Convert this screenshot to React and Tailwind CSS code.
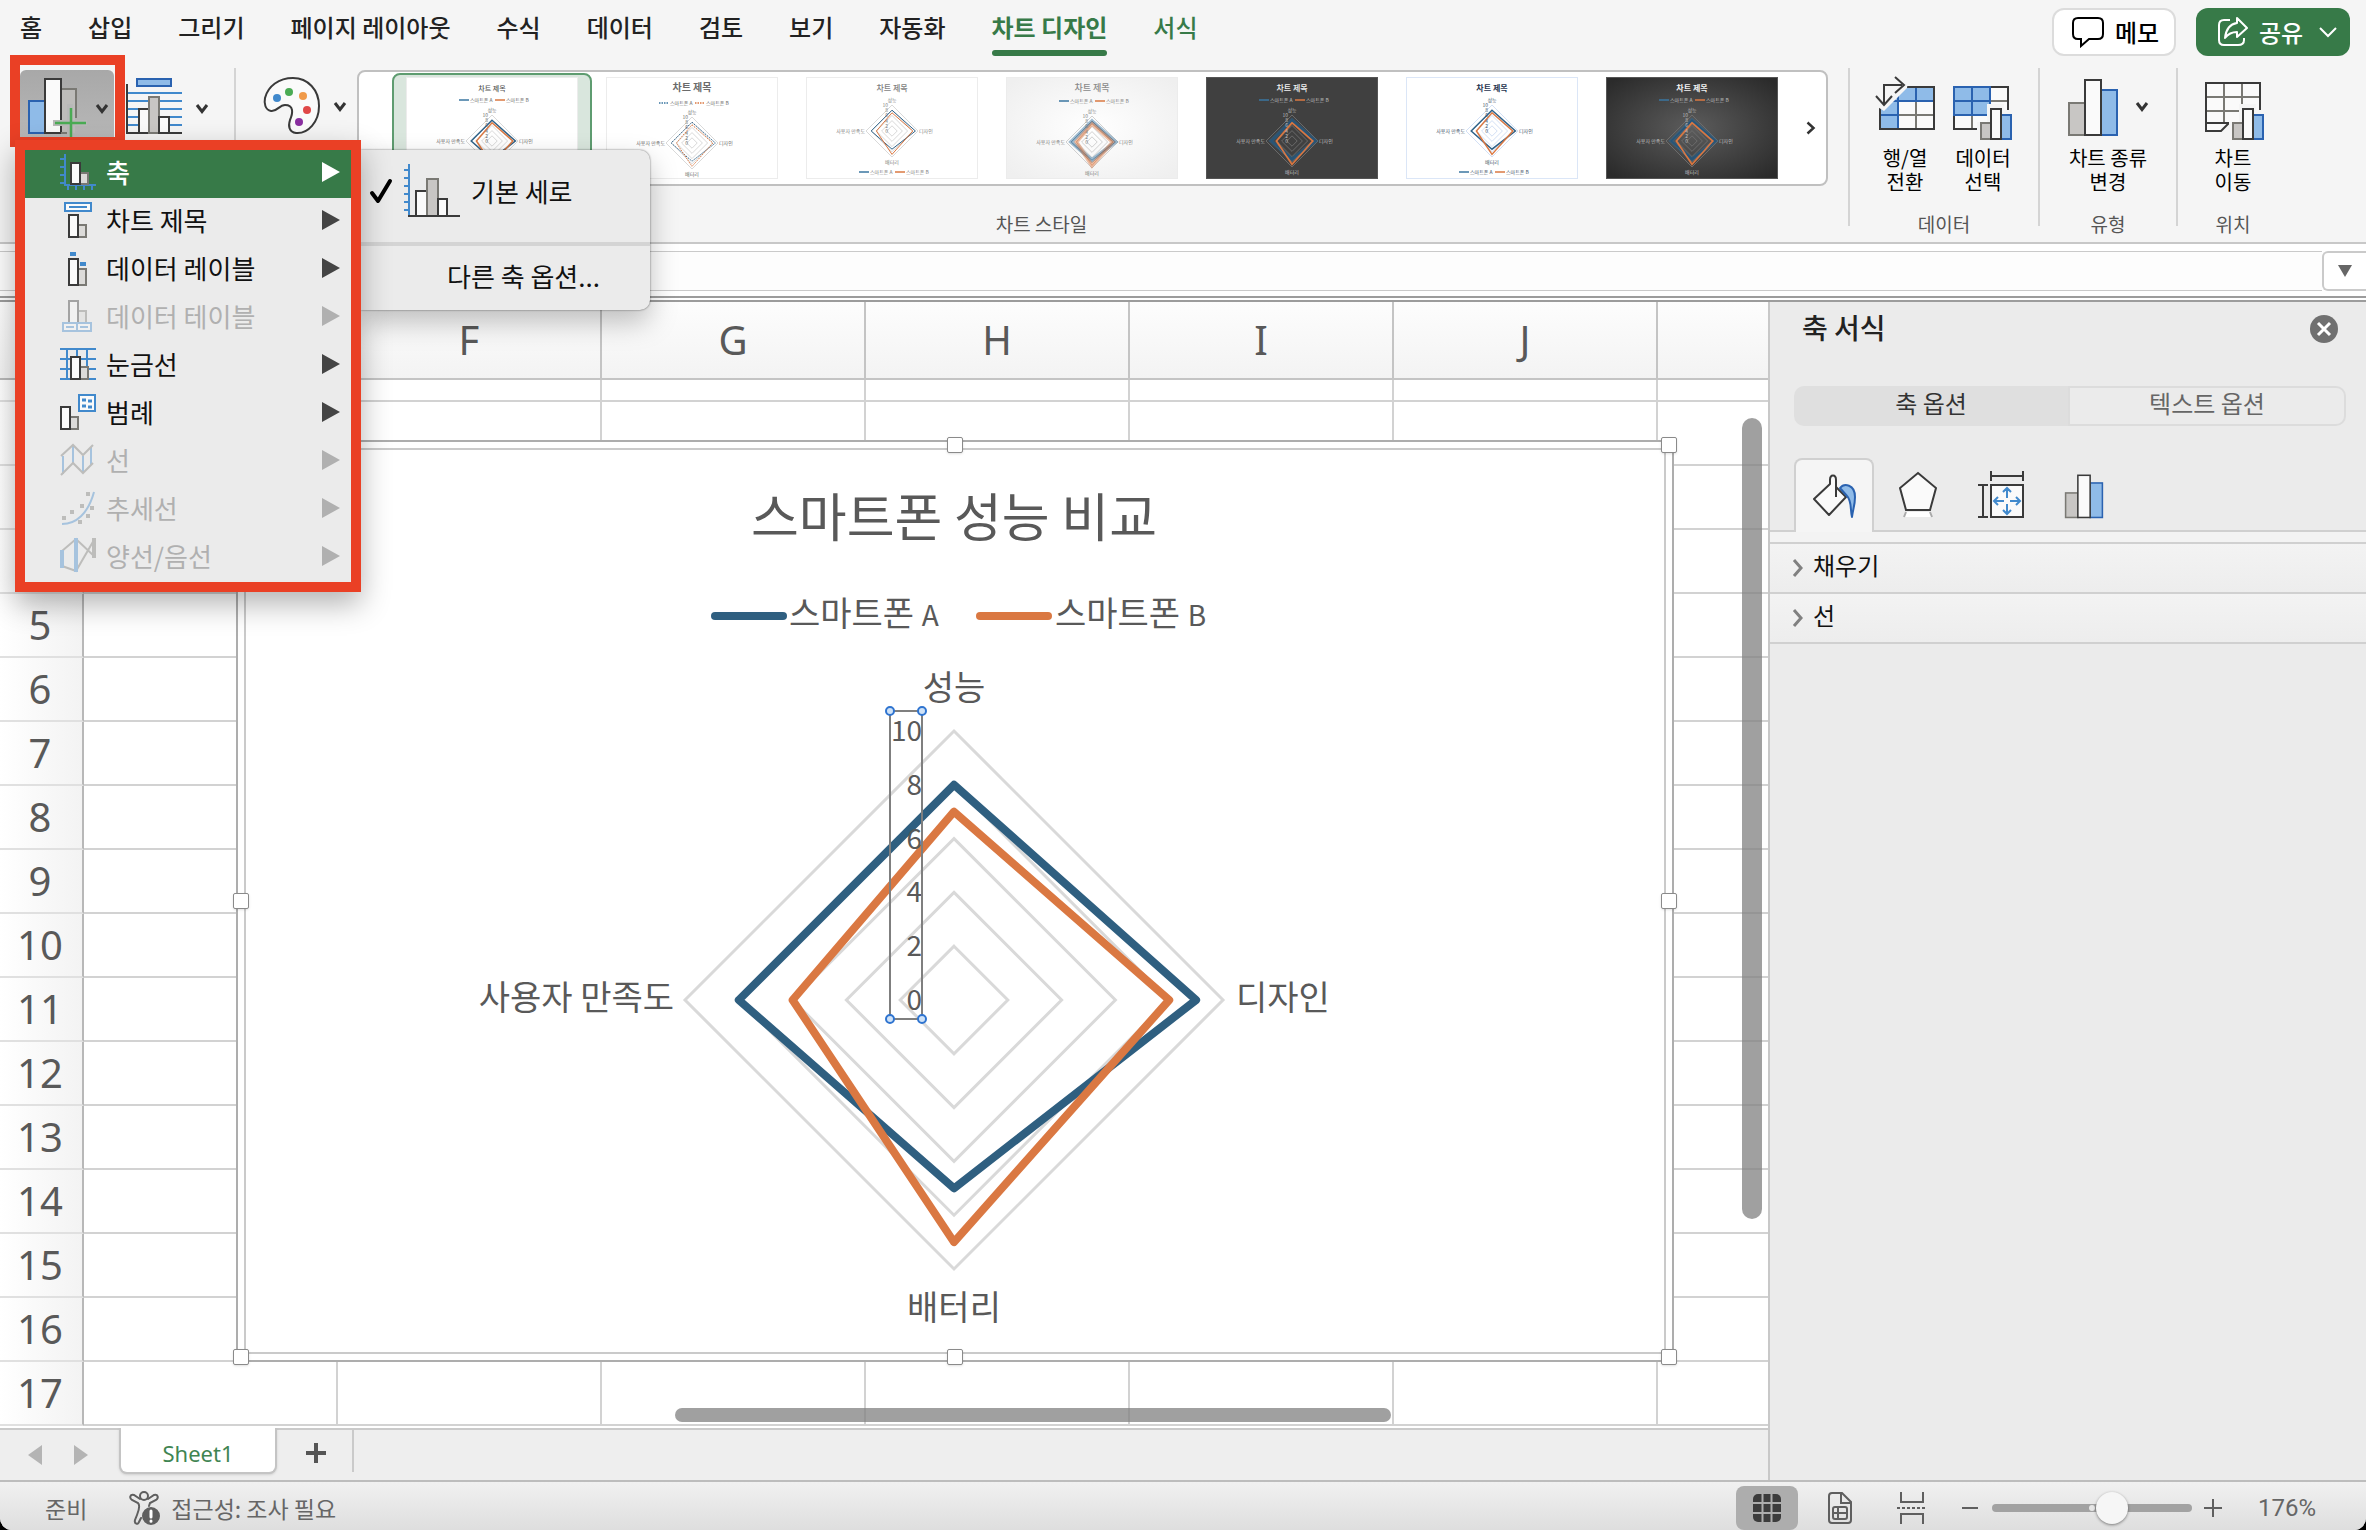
import { useId, useState } from "react";
import clsx from "clsx";

const DARK = "#3a3a3a";
const BLUE = "#4189cc";
const DEEP = "#2a62b0";
const SKY = "#8fbbe8";
const GRAY = "#7a7974";
const SILVER = "#c8c6c4";
const NAVY = "#2f5f80";
const ORANGE = "#da7842";

const tabs = [
  "홈",
  "삽입",
  "그리기",
  "페이지 레이아웃",
  "수식",
  "데이터",
  "검토",
  "보기",
  "자동화",
  "차트 디자인",
  "서식",
];

const columns = ["", "F", "G", "H", "I", "J"];
const rows = ["", "", "", "", 5, 6, 7, 8, 9, 10, 11, 12, 13, 14, 15, 16, 17];

// 레이더 차트 데이터 (위, 오른쪽, 아래, 왼쪽)
const seriesA = [8, 9, 7, 8];
const seriesB = [7, 8, 9, 6];
const ticks = [10, 8, 6, 4, 2, 0];

const radar = (cx, cy, r, v) =>
  [
    [cx, cy - (r * v[0]) / 10],
    [cx + (r * v[1]) / 10, cy],
    [cx, cy + (r * v[2]) / 10],
    [cx - (r * v[3]) / 10, cy],
  ]
    .map((p) => p.join(","))
    .join(" ");

function Chevron({ className }) {
  return (
    <svg className={className} width="14" height="12" viewBox="0 0 14 12" fill="none">
      <path d="M2 2 L7 8.5 L12 2" stroke="#333" strokeWidth="3" />
    </svg>
  );
}

/* ---------- 리본 아이콘 ---------- */

function AddElementIcon() {
  return (
    <svg width="62" height="62" viewBox="0 0 62 62" fill="none">
      <rect x="3" y="25" width="16" height="32" fill={SKY} stroke={DEEP} strokeWidth="2" />
      <path d="M35 13 H50 V42" stroke={GRAY} strokeWidth="2" />
      <rect x="36" y="14" width="13" height="43" fill="#bdbcba" />
      <rect x="19" y="3" width="16" height="54" fill="#fafafa" stroke={DARK} strokeWidth="2" />
      <path d="M35 57 H41" stroke={GRAY} strokeWidth="2" />
      <path d="M44 28 V62 M27 47 H61" stroke="#b8b8b8" strokeWidth="6" />
      <path d="M45 32 V62 M29 47 H60" stroke="#4aab54" strokeWidth="2.5" />
    </svg>
  );
}

function QuickLayoutIcon() {
  return (
    <svg width="58" height="60" viewBox="0 0 58 60" fill="none">
      <path d="M3 17 H57 M3 25 H57 M3 33 H57 M3 41 H57 M3 49 H57" stroke={BLUE} strokeWidth="2" />
      <rect x="12" y="3" width="34" height="7" fill={SKY} stroke={DEEP} strokeWidth="2" />
      <path d="M2 8 V57 H57" stroke={DARK} strokeWidth="2" />
      <rect x="14" y="33" width="10" height="24" fill="#fafafa" stroke={DARK} strokeWidth="2" />
      <rect x="24" y="21" width="10" height="36" fill={SILVER} stroke={GRAY} strokeWidth="2" />
      <rect x="34" y="41" width="10" height="16" fill="#fafafa" stroke={DARK} strokeWidth="2" />
    </svg>
  );
}

function PaletteIcon() {
  return (
    <svg width="58" height="60" viewBox="0 0 58 60" fill="none">
      <path
        d="M30 2 C45 2 56 14 56 30 C56 46 45 58 33 57 C26 56 25 50 27 44 C30 37 31 29 22 29 C16 29 14 36 8 35 C2 34 1 27 2 22 C5 10 16 2 30 2 Z"
        fill="#fafafa"
        stroke={DARK}
        strokeWidth="2"
      />
      <circle cx="14" cy="22" r="4" fill="#4189cc" />
      <circle cx="26" cy="16" r="4" fill="#4aab54" />
      <circle cx="40" cy="20" r="4" fill="#f09a4a" />
      <circle cx="44" cy="34" r="4" fill="#e04848" />
      <circle cx="36" cy="46" r="4" fill="#8a2fa0" />
    </svg>
  );
}

function SwitchRowColIcon() {
  return (
    <svg width="64" height="66" viewBox="0 0 64 66" fill="none">
      <rect x="7" y="13" width="54" height="42" fill="#fafafa" />
      <path d="M7 13 H61 V27 H25 V55 H7 Z" fill={SKY} />
      <path d="M25 41 H61 M43 27 V55" stroke={GRAY} strokeWidth="2" />
      <rect x="7" y="13" width="54" height="42" stroke={DARK} strokeWidth="2" />
      <path d="M8 27 H60 M25 14 V54 M43 14 V27 M8 41 H25" stroke={DEEP} strokeWidth="2" />
      <path d="M0 0 H36 L34 14 L11 37 L0 30 Z" fill="#f5f5f5" />
      <path d="M11 30 V11 H29 M22 3 L31 11 L22 19 M3 22 L11 31 L19 22" stroke={DARK} strokeWidth="2" />
    </svg>
  );
}

function SmallBars({ x, y }) {
  return (
    <g transform={`translate(${x} ${y})`}>
      <path d="M-3 15 H7 V-3 H24 V3 H36 V36 H-3 Z" fill="#f5f5f5" />
      <rect x="1" y="16" width="10" height="16" fill={SILVER} stroke={GRAY} strokeWidth="2" />
      <rect x="21" y="8" width="10" height="24" fill={SKY} stroke={DEEP} strokeWidth="2" />
      <rect x="11" y="2" width="10" height="30" fill="#fafafa" stroke={DARK} strokeWidth="2" />
    </g>
  );
}

function SelectDataIcon() {
  return (
    <svg width="64" height="66" viewBox="0 0 64 66" fill="none">
      <rect x="3" y="13" width="54" height="42" fill="#fafafa" stroke={DARK} strokeWidth="2" />
      <path d="M39 27 H56 M21 41 V54 M39 41 V54" stroke={GRAY} strokeWidth="2" />
      <rect x="3" y="13" width="36" height="28" fill={SKY} stroke={DEEP} strokeWidth="2" />
      <path d="M3 27 H39 M21 13 V41" stroke={DEEP} strokeWidth="2" />
      <SmallBars x={29} y={33} />
    </svg>
  );
}

function MoveChartIcon() {
  return (
    <svg className="ml-1" width="64" height="66" viewBox="0 0 64 66" fill="none">
      <path d="M3 9 H57 V50 H25 L18 57 H3 Z" fill="#fafafa" />
      <path d="M3 23 H57 M3 37 H57 M21 9 V49 M39 9 V49" stroke={GRAY} strokeWidth="2" />
      <path d="M57 40 V9 H3 V57 H18 L26 49 H3" stroke={DARK} strokeWidth="2" />
      <SmallBars x={29} y={33} />
    </svg>
  );
}

function ChangeTypeIcon({ width = 52, height = 60 }) {
  return (
    <svg className="shrink-0" width={width} height={height} viewBox="0 0 52 60" fill="none">
      <rect x="2" y="26" width="16" height="32" fill={SILVER} stroke={GRAY} strokeWidth="2" />
      <rect x="34" y="13" width="16" height="45" fill={SKY} stroke={DEEP} strokeWidth="2" />
      <rect x="18" y="3" width="16" height="55" fill="#fafafa" stroke={DARK} strokeWidth="2" />
    </svg>
  );
}

/* ---------- 차트 요소 메뉴 아이콘 ---------- */

function Bars({ x, y, h }) {
  return (
    <>
      <rect x={x + 9} y={y + 10} width="8" height={h - 10} fill="#dcdbd9" stroke={GRAY} strokeWidth="2" />
      <rect x={x} y={y} width="9" height={h} fill="#fafafa" stroke={DARK} strokeWidth="2" />
    </>
  );
}

const menuIcons = {
  axis: (
    <>
      <path d="M5 4 V35 H36 M0 9 H5 M0 17 H5 M0 25 H5 M0 33 H5 M8 35 V40 M16 35 V40 M24 35 V40 M32 35 V40" stroke={BLUE} strokeWidth="2" />
      <Bars x={11} y={13} h={21} />
    </>
  ),
  title: (
    <>
      <rect x="5" y="5" width="26" height="8" fill="#fafafa" stroke={BLUE} strokeWidth="2" />
      <path d="M9 9 H27" stroke={BLUE} strokeWidth="2" />
      <Bars x={9} y={17} h={22} />
    </>
  ),
  label: (
    <>
      <rect x="10" y="6" width="6" height="4" fill={BLUE} />
      <rect x="20" y="16" width="6" height="4" fill={BLUE} />
      <Bars x={9} y={13} h={26} />
    </>
  ),
  table: (
    <>
      <Bars x={9} y={7} h={22} />
      <path d="M3 29 H31 V37 H3 Z M17 29 V37" fill="#fafafa" stroke={BLUE} strokeWidth="2" />
      <path d="M6 33 H14 M20 33 H28" stroke={BLUE} strokeWidth="2" />
    </>
  ),
  grid: (
    <>
      <path d="M0 7 H36 M0 17 H36 M0 27 H36 M0 37 H36 M7 7 V38 M17 7 V38 M27 7 V38" stroke={BLUE} strokeWidth="2" />
      <Bars x={11} y={15} h={22} />
    </>
  ),
  legend: (
    <>
      <Bars x={1} y={17} h={22} />
      <rect x="19" y="5" width="16" height="16" fill="#fafafa" stroke={BLUE} strokeWidth="2" />
      <path d="M22 10 H26 M28 11 H32 M22 16 H26 M28 17 H32" stroke={BLUE} strokeWidth="3" />
    </>
  ),
  line: (
    <>
      <path d="M3 18 V36 M13 8 V26 M23 18 V35 M31 9 V27" stroke={BLUE} strokeWidth="2" />
      <path d="M1 18 L13 7 L23 17 L33 7 M1 37 L13 25 L23 35 L33 25" stroke={GRAY} strokeWidth="2" />
    </>
  ),
  trend: (
    <>
      <path d="M2 38 C16 38 28 28 34 6" stroke={BLUE} strokeWidth="2" />
      <path d="M26 8 H30 M20 20 H24 M10 26 H14 M2 32 H6 M30 22 H34 M26 30 H30 M18 36 H22" stroke={GRAY} strokeWidth="4" />
    </>
  ),
  updown: (
    <>
      <path d="M2 17 L16 5 L34 22 M2 32 L16 37 L34 6" stroke={GRAY} strokeWidth="2" />
      <path d="M2 16 V34 M16 4 V38" stroke={BLUE} strokeWidth="4" />
      <path d="M34 4 V24" stroke={GRAY} strokeWidth="4" />
    </>
  ),
};

const menuItems = [
  { key: "axis", label: "축" },
  { key: "title", label: "차트 제목" },
  { key: "label", label: "데이터 레이블" },
  { key: "table", label: "데이터 테이블", disabled: true },
  { key: "grid", label: "눈금선" },
  { key: "legend", label: "범례" },
  { key: "line", label: "선", disabled: true },
  { key: "trend", label: "추세선", disabled: true },
  { key: "updown", label: "양선/음선", disabled: true },
];

function ElementMenu() {
  const [active, setActive] = useState("axis");

  return (
    <ul className="absolute left-[15px] top-[76px] z-30 w-[346px] border-10 border-[#ea4025] bg-[#ebebeb] shadow-[0_12px_28px_rgba(0,0,0,0.3)]">
      {menuItems.map((item) => {
        const on = active === item.key;
        return (
          <li key={item.key}>
            <button
              type="button"
              disabled={item.disabled}
              onMouseEnter={() => setActive(item.key)}
              className={clsx(
                "flex h-12 w-full items-center pr-[11px] pl-[35px] text-left text-[26px] leading-none",
                on && "bg-[#377a48] font-medium text-white",
                !on && !item.disabled && "text-[#111]",
                item.disabled && "text-[#b0b0b0]"
              )}
            >
              <svg
                className={clsx("mr-[10px] shrink-0", item.disabled && "opacity-40")}
                width="36"
                height="48"
                viewBox="0 0 36 48"
                fill="none"
              >
                {menuIcons[item.key]}
              </svg>
              <span className="flex-1 pb-1">{item.label}</span>
              <svg className="mb-1" width="18" height="20" viewBox="0 0 18 20">
                <path d="M0 0 L18 10 L0 20 Z" fill={on ? "#fff" : item.disabled ? "#b0b0b0" : "#444"} />
              </svg>
            </button>
          </li>
        );
      })}
    </ul>
  );
}

function AxisSubmenu() {
  return (
    <div className="absolute left-[361px] top-[86px] z-20 w-[289px] rounded-r-[10px] bg-[#ebebeb] text-[26px] leading-none text-[#111] shadow-[0_0_2px_rgba(0,0,0,0.6),0_12px_28px_rgba(0,0,0,0.25)]">
      <button type="button" className="flex h-[92px] w-full items-center pb-2 pl-2">
        <svg width="24" height="28" viewBox="0 0 24 28" fill="none">
          <path d="M3 15 L9 23 L21 3" stroke="#000" strokeWidth="4" strokeLinecap="round" strokeLinejoin="round" />
        </svg>
        <svg className="ml-[10px]" width="58" height="56" viewBox="0 0 58 56" fill="none">
          <path d="M6 0 V52 M1 6 H6 M1 14 H6 M1 22 H6 M1 30 H6 M1 38 H6 M1 46 H6" stroke={BLUE} strokeWidth="2" />
          <rect x="13" y="27" width="11" height="25" fill="#fafafa" stroke={DARK} strokeWidth="2" />
          <rect x="24" y="15" width="11" height="37" fill={SILVER} stroke={GRAY} strokeWidth="2" />
          <rect x="35" y="35" width="9" height="17" fill="#fafafa" stroke={DARK} strokeWidth="2" />
          <path d="M5 52 H57" stroke={DARK} strokeWidth="2" />
        </svg>
        <span className="ml-[10px] pb-0.5">기본 세로</span>
      </button>
      <div className="h-1 bg-[#d4d4d4]" />
      <button type="button" className="flex h-16 w-full items-center pb-1 pl-[86px]">
        다른 축 옵션...
      </button>
    </div>
  );
}

/* ---------- 차트 스타일 갤러리 ---------- */

const styles = [
  { size: 7, title: "#595959", text: "#6b6b6b", grid: "#d9d9d9" },
  { size: 10, title: "#6b6b6b", text: "#6b6b6b", grid: "#d9d9d9", bold: true, thin: true, dash: "1.5 1", cy: 66, ly: 26 },
  { size: 8, title: "#7f7f7f", text: "#7f7f7f", grid: "#d9d9d9", bottom: true, thin: true },
  { size: 9, title: "#8a8a8a", text: "#7f7f7f", grid: "#d0d0d0", bg: ["#ffffff", "#efefef"], wide: true, cy: 65, ly: 24 },
  { size: 8, title: "#f2f2f2", text: "#bfbfbf", grid: "#6a6a6a", bg: ["#404040", "#404040"], glow: true },
  { size: 8, title: "#1f3550", text: "#44546a", grid: "#d3e0f5", bottom: true, bold: true, edge: "#dbe6f7" },
  { size: 8, title: "#f2f2f2", text: "#bfbfbf", grid: "#6c6c6c", bg: ["#5c5c5c", "#2b2b2b"], glow: true, bold: true },
];

function StyleThumb({ s }) {
  const id = useId();
  const cy = s.cy || (s.bottom ? 54 : 64);
  const r = 26;
  const ly = s.ly || (s.bottom ? 95 : 23);
  const width = s.wide ? 0.5 : s.thin ? 1 : 1.5;

  return (
    <svg width="172" height="102" viewBox="0 0 172 102" fill="none">
      <defs>
        <radialGradient id={id} cx="50%" cy="50%" r="65%">
          <stop offset="0" stopColor={s.bg ? s.bg[0] : "#fff"} />
          <stop offset="1" stopColor={s.bg ? s.bg[1] : "#fff"} />
        </radialGradient>
      </defs>
      <rect width="172" height="102" fill={`url(#${id})`} />
      <rect x="0.5" y="0.5" width="171" height="101" stroke={s.edge || (s.glow ? "#555" : "#ececec")} />
      <text x="86" y="14" textAnchor="middle" fontSize={s.size} fontWeight={s.bold ? 700 : 500} fill={s.title}>
        차트 제목
      </text>
      <path d={`M53 ${ly} H63`} stroke="#3a76a0" strokeWidth="1.5" strokeDasharray={s.dash} />
      <path d={`M89 ${ly} H99`} stroke={ORANGE} strokeWidth="1.5" strokeDasharray={s.dash} />
      <g fontSize="5" fill={s.text}>
        <text x="64" y={ly + 2}>스마트폰 A</text>
        <text x="100" y={ly + 2}>스마트폰 B</text>
        <text x="86" y={cy - 29} textAnchor="middle">성능</text>
        <text x="86" y={cy + 33} textAnchor="middle">배터리</text>
        <text x="59" y={cy + 2} textAnchor="end">사용자 만족도</text>
        <text x="113" y={cy + 2}>디자인</text>
      </g>
      {[2, 4, 6, 8, 10].map((v) => (
        <polygon key={v} points={radar(86, cy, r, [v, v, v, v])} stroke={s.grid} />
      ))}
      {(s.wide || s.glow) && (
        <>
          <polygon points={radar(86, cy, r, seriesA)} stroke="#2a6a98" strokeWidth="4" opacity="0.45" />
          <polygon points={radar(86, cy, r, seriesB)} stroke={ORANGE} strokeWidth={s.wide ? 4 : 2} opacity="0.45" />
        </>
      )}
      <polygon points={radar(86, cy, r, seriesA)} stroke={s.glow ? "#25557a" : "#2f6288"} strokeWidth={width} strokeDasharray={s.dash} />
      <polygon points={radar(86, cy, r, seriesB)} stroke={ORANGE} strokeWidth={width} strokeDasharray={s.dash} />
      <g fontSize="5" fill={s.text} textAnchor="end">
        {ticks.map((t) => (
          <text key={t} x="82" y={cy + 2 - (r * t) / 10}>
            {t}
          </text>
        ))}
      </g>
    </svg>
  );
}

function RibbonButton({ icon, label, children }) {
  return (
    <button type="button" className="flex w-[78px] flex-col items-center text-[20px] leading-6 text-black">
      <span className="flex h-[78px] items-center">
        {icon}
        {children}
      </span>
      <span className="whitespace-pre">{label}</span>
    </button>
  );
}

function RibbonGroup({ label, className, children }) {
  return (
    <div className={clsx("flex flex-col", className)}>
      <div className="flex h-[142px] justify-center">{children}</div>
      <div className="text-center text-[19px] leading-7 text-[#555]">{label}</div>
    </div>
  );
}

function Divider() {
  return <div className="h-[158px] w-0.5 shrink-0 bg-[#d4d4d4]" />;
}

function Ribbon() {
  return (
    <div className="relative flex h-[180px] shrink-0 items-start border-b-2 border-[#c8c8c8] pt-1">
      <div className="flex w-[234px] shrink-0 items-start pt-0.5 pl-5">
        <button
          type="button"
          aria-label="차트 요소 추가"
          className="flex h-[70px] w-[94px] items-start rounded-t-md bg-linear-to-b from-[#a8a8a8] to-[#b8b8b8] pt-1.5 pl-1.5"
        >
          <AddElementIcon />
          <Chevron className="mt-[27px] ml-[7px]" />
        </button>
        <button type="button" aria-label="빠른 레이아웃" className="ml-[11px] flex items-start pt-1.5">
          <QuickLayoutIcon />
          <Chevron className="mt-[27px] ml-3" />
        </button>
      </div>
      <Divider />
      <button type="button" aria-label="색 변경" className="ml-[27px] flex shrink-0 items-start pt-2">
        <PaletteIcon />
        <Chevron className="mt-[25px] ml-3" />
      </button>
      <div className="mr-5 ml-[10px] flex min-w-0 flex-1 flex-col pt-0.5">
        <div className="flex h-[116px] items-center overflow-hidden rounded-lg border-2 border-[#c0c0c0] bg-white pl-[33px]">
          {styles.map((s, i) => (
            <button
              key={i}
              type="button"
              aria-label={`스타일 ${i + 1}`}
              className={clsx(
                "flex h-[110px] w-[200px] shrink-0 items-center justify-center rounded-lg",
                i === 0 && "border-2 border-[#5e9c70] bg-[#d9e6dd]"
              )}
            >
              <StyleThumb s={s} />
            </button>
          ))}
          <button type="button" aria-label="다음 스타일" className="ml-auto pr-[10px]">
            <svg width="10" height="14" viewBox="0 0 10 14" fill="none">
              <path d="M1.5 1.5 L7.5 7 L1.5 12.5" stroke="#333" strokeWidth="2.5" />
            </svg>
          </button>
        </div>
        <div className="mt-6 pr-[102px] text-center text-[19px] leading-7 text-[#555]">차트 스타일</div>
      </div>
      <Divider />
      <RibbonGroup label="데이터" className="w-[188px] shrink-0">
        <RibbonButton icon={<SwitchRowColIcon />} label={"행/열\n전환"} />
        <RibbonButton icon={<SelectDataIcon />} label={"데이터\n선택"} />
      </RibbonGroup>
      <Divider />
      <RibbonGroup label="유형" className="w-[136px] shrink-0">
        <RibbonButton icon={<ChangeTypeIcon />} label={"차트 종류\n변경"}>
          <Chevron className="ml-4 shrink-0" />
        </RibbonButton>
      </RibbonGroup>
      <Divider />
      <RibbonGroup label="위치" className="mr-[78px] w-[110px] shrink-0">
        <RibbonButton icon={<MoveChartIcon />} label={"차트\n이동"} />
      </RibbonGroup>

      {/* 강조 테두리 + 펼쳐진 메뉴 */}
      <div className="pointer-events-none absolute -top-[9px] left-[10px] z-30 h-[92px] w-[115px] border-10 border-[#ea4025]" />
      <ElementMenu />
      <AxisSubmenu />
    </div>
  );
}

function Handle({ className }) {
  return <span className={clsx("absolute size-4 rounded-xs border border-[#8a8a8a] bg-white shadow-sm", className)} />;
}

function Chart() {
  const cx = 717;
  const cy = 559;
  const r = 269;

  return (
    <div className="absolute top-[138px] left-[236px] h-[922px] w-[1438px] border-2 border-[#adadad] bg-white p-1.5">
      <div className="h-full border-2 border-[#cacaca]" />
      <svg className="absolute inset-0" width="1434" height="918" viewBox="1 1 1434 918" fill="none">
        <text x={cx} y="96" textAnchor="middle" fontSize="52" fill="#595959">
          스마트폰 성능 비교
        </text>
        <path d="M478 175 H546" stroke={NAVY} strokeWidth="8" strokeLinecap="round" />
        <path d="M743 175 H811" stroke={ORANGE} strokeWidth="8" strokeLinecap="round" />
        <g fontSize="34" fill="#595959">
          <text x="552" y="185">
            스마트폰 <tspan fontSize="28">A</tspan>
          </text>
          <text x="818" y="185">
            스마트폰 <tspan fontSize="28">B</tspan>
          </text>
          <text x={cx} y="259" textAnchor="middle">성능</text>
          <text x="999" y="569">디자인</text>
          <text x={cx} y="879" textAnchor="middle">배터리</text>
          <text x="437" y="569" textAnchor="end">사용자 만족도</text>
        </g>
        {[2, 4, 6, 8, 10].map((v) => (
          <polygon key={v} points={radar(cx, cy, r, [v, v, v, v])} stroke="#d9d9d9" strokeWidth="3" />
        ))}
        <polygon points={radar(cx, cy, r, seriesA)} stroke={NAVY} strokeWidth="8" strokeLinejoin="round" />
        <polygon points={radar(cx, cy, r, seriesB)} stroke={ORANGE} strokeWidth="8" strokeLinejoin="round" />
        <g fontSize="28" fill="#595959" textAnchor="end">
          {ticks.map((t) => (
            <text key={t} x="685" y={cy + 10 - (r * t) / 10}>
              {t}
            </text>
          ))}
        </g>
        <rect x="653" y="270" width="32" height="308" stroke="#7f7f7f" strokeWidth="2" />
        {[
          [653, 270],
          [685, 270],
          [653, 578],
          [685, 578],
        ].map(([x, y]) => (
          <circle key={`${x}-${y}`} cx={x} cy={y} r="4" fill="#cfe2f7" stroke="#2f74d0" strokeWidth="2" />
        ))}
      </svg>
      <Handle className="-top-[5px] -left-[5px]" />
      <Handle className="-top-[5px] left-1/2 -translate-x-1/2" />
      <Handle className="-top-[5px] -right-[5px]" />
      <Handle className="top-1/2 -left-[5px] -translate-y-1/2" />
      <Handle className="top-1/2 -right-[5px] -translate-y-1/2" />
      <Handle className="-bottom-[5px] -left-[5px]" />
      <Handle className="-bottom-[5px] left-1/2 -translate-x-1/2" />
      <Handle className="-right-[5px] -bottom-[5px]" />
    </div>
  );
}

function Sheet() {
  return (
    <div className="relative min-h-0 flex-1 overflow-hidden bg-white">
      <table className="w-full table-fixed border-separate border-spacing-0 font-['Noto_Sans',sans-serif] text-[#595959]">
        <thead>
          <tr className="h-[78px] bg-linear-to-b from-[#fdfdfd] to-[#f3f3f3]">
            <th className="w-[84px] border-r-2 border-b-2 border-[#b8b8b8]" />
            {columns.map((c, i) => (
              <th
                key={i}
                scope="col"
                className={clsx(
                  "border-r-2 border-b-2 border-[#c4c4c4] p-0 text-[40px] leading-none font-normal",
                  i === 0 ? "w-[254px]" : "w-[264px]"
                )}
              >
                {c}
              </th>
            ))}
            <th className="border-b-2 border-[#c4c4c4]" />
          </tr>
        </thead>
        <tbody>
          {rows.map((n, i) => (
            <tr key={i} className={i === 0 ? "h-[22px]" : "h-16"}>
              <th
                scope="row"
                className="border-r-2 border-b-2 border-r-[#b8b8b8] border-b-[#e0e0e0] bg-linear-to-r from-white to-[#f3f3f3] p-0 pr-0.5 text-[40px] leading-none font-normal"
              >
                {n}
              </th>
              {columns.map((c, j) => (
                <td key={j} className="border-r-2 border-b-2 border-[#d2d2d2] p-0" />
              ))}
              <td className="border-b-2 border-[#d2d2d2] p-0" />
            </tr>
          ))}
        </tbody>
      </table>
      <Chart />
      <div className="absolute top-[116px] right-1.5 h-[801px] w-5 rounded-full bg-[#808080]/75" />
      <div className="absolute bottom-1.5 left-[675px] h-3.5 w-[716px] rounded-full bg-[#808080]/75" />
    </div>
  );
}

function SheetBar() {
  return (
    <div className="flex h-[52px] shrink-0 items-start border-t-2 border-[#cacaca] bg-[#eeeeee]">
      <button type="button" aria-label="이전 시트" className="mt-[15px] ml-7">
        <svg width="14" height="20" viewBox="0 0 14 20">
          <path d="M14 0 V20 L0 10 Z" fill="#b4b4b4" />
        </svg>
      </button>
      <button type="button" aria-label="다음 시트" className="mt-[15px] ml-8">
        <svg width="14" height="20" viewBox="0 0 14 20">
          <path d="M0 0 V20 L14 10 Z" fill="#b4b4b4" />
        </svg>
      </button>
      <button
        type="button"
        className="-mt-0.5 ml-[31px] h-[46px] w-[158px] rounded-b-lg border-2 border-t-0 border-[#c4c4c4] bg-white pt-1.5 font-['Noto_Sans',sans-serif] text-[22px] text-[#3f8552] shadow-sm"
      >
        Sheet1
      </button>
      <button type="button" aria-label="시트 추가" className="mt-[13px] ml-[29px]">
        <svg width="20" height="20" viewBox="0 0 20 20">
          <path d="M10 0 V20 M0 10 H20" stroke="#555" strokeWidth="4" />
        </svg>
      </button>
      <div className="ml-[26px] h-[42px] w-0.5 bg-[#cacaca]" />
    </div>
  );
}

function FormatPane() {
  return (
    <aside className="flex w-[598px] shrink-0 flex-col border-l-2 border-[#c8c8c8] bg-[#ebebeb]">
      <div className="flex h-[54px] items-center justify-between pr-7 pl-8">
        <h2 className="pb-1 text-[28px] leading-none font-medium text-[#222]">축 서식</h2>
        <button type="button" aria-label="닫기">
          <svg width="28" height="28" viewBox="0 0 28 28" fill="none">
            <circle cx="14" cy="14" r="14" fill="#707070" />
            <path d="M8 8 L20 20 M20 8 L8 20" stroke="#fff" strokeWidth="3" />
          </svg>
        </button>
      </div>

      <div className="mt-[30px] mr-5 ml-6 flex h-10 text-[24px] leading-none">
        <button type="button" className="flex-1 rounded-l-[10px] bg-[#dfdfdf] pb-1.5 text-[#333]">
          축 옵션
        </button>
        <button type="button" className="flex-1 rounded-r-[10px] border-2 border-[#dcdcdc] pb-1.5 text-[#666]">
          텍스트 옵션
        </button>
      </div>

      <div className="mt-8 flex h-[74px]">
        <div className="w-6 border-b-2 border-[#d0d0d0]" />
        <button
          type="button"
          aria-label="채우기 및 선"
          className="flex w-20 items-center justify-center rounded-t-lg border-2 border-b-0 border-[#d0d0d0] bg-[#f5f5f5]"
        >
          <svg width="46" height="46" viewBox="0 0 46 46" fill="none">
            <path
              d="M25 24 V7 C25 1 19 1 19 7 V11 L3 26 L18 42 L35 24 L25 14"
              fill="#fafafa"
              stroke={DARK}
              strokeWidth="2"
              strokeLinejoin="round"
            />
            <path
              d="M29 15 C33 10 44 11 44 24 C44 32 42 36 41 44 C39 36 41 28 36 23 Z"
              fill={SKY}
              stroke={DEEP}
              strokeWidth="2"
              strokeLinejoin="round"
            />
          </svg>
        </button>
        <div className="flex flex-1 items-center border-b-2 border-[#d0d0d0] pl-6">
          <button type="button" aria-label="효과">
            <svg width="40" height="48" viewBox="0 0 40 48" fill="none">
              <path d="M20 3 L38 18 L32 40 H8 L2 18 Z" fill="#fafafa" stroke={DARK} strokeWidth="2" />
              <path d="M8 42 H32 L34 47 H6 Z" fill="#fff" />
              <path d="M8 42 L6 47 M32 42 L34 47" stroke="#aaa" strokeWidth="2" />
            </svg>
          </button>
          <button type="button" aria-label="크기 및 속성" className="ml-[39px]">
            <svg width="48" height="48" viewBox="0 0 48 48" fill="none">
              <rect x="14" y="15" width="32" height="32" fill="#fafafa" stroke={DARK} strokeWidth="2" />
              <path d="M14 1 V11 M46 1 V11 M14 6 H46 M1 15 H11 M1 47 H11 M6 15 V47" stroke={DARK} strokeWidth="2" />
              <path
                d="M30 28 V18 M26 22 L30 18 L34 22 M30 34 V44 M26 40 L30 44 L34 40 M27 31 H17 M21 27 L17 31 L21 35 M33 31 H43 M39 27 L43 31 L39 35"
                stroke={BLUE}
                strokeWidth="2"
              />
            </svg>
          </button>
          <button type="button" aria-label="축 옵션" className="ml-[39px] pt-1">
            <ChangeTypeIcon width={40} height={46} />
          </button>
        </div>
      </div>

      <div className="h-[10px] bg-[#f3f3f3]" />
      {["채우기", "선"].map((s) => (
        <button
          key={s}
          type="button"
          className="flex h-[50px] items-center border-t-2 border-[#d0d0d0] bg-linear-to-b from-[#f3f3f3] to-[#ededed] pl-[22px] text-[24px] leading-none text-[#111]"
        >
          <svg width="11" height="18" viewBox="0 0 11 18" fill="none">
            <path d="M2 1 L9 9 L2 17" stroke="#808080" strokeWidth="3" />
          </svg>
          <span className="ml-[10px] pb-1.5">{s}</span>
        </button>
      ))}
      <div className="flex-1 border-t-2 border-[#d0d0d0]" />
    </aside>
  );
}

function StatusBar() {
  const [zoom, setZoom] = useState(62);

  return (
    <footer className="flex h-[50px] shrink-0 items-center border-t-2 border-[#bdbdbd] bg-linear-to-b from-[#f1f1f1] to-[#dedede] pt-1 pr-[50px] pl-[45px] text-[23px] leading-none text-[#666]">
      <span>준비</span>
      <button type="button" className="ml-[42px] flex items-center">
        <svg width="32" height="36" viewBox="0 0 32 36" fill="none" stroke="#5f5f5f" strokeWidth="2" strokeLinecap="round">
          <circle cx="15" cy="6" r="4" />
          <path d="M11 9 L5 5 C1 4 0 8 3 10 L9 13 C11 15 10 20 8 25 L6 30 C5 34 9 35 10 32 L12 28" />
          <path d="M19 9 L25 5 C29 4 30 8 27 10 L21 13 L20 16" />
          <circle cx="22" cy="26" r="8" fill="#5f5f5f" />
          <path d="M22 21 V27 M22 31 V31.2" stroke="#fff" strokeWidth="3" />
        </svg>
        <span className="ml-2.5">접근성: 조사 필요</span>
      </button>

      <button type="button" aria-label="기본" className="ml-auto flex h-11 w-[62px] items-center justify-center self-end rounded-lg bg-[#adadad]">
        <svg width="28" height="28" viewBox="0 0 28 28">
          <rect width="28" height="28" rx="5" fill="#3c3c3c" />
          <path d="M9.5 0 V28 M18.5 0 V28 M0 9 H28 M0 19 H28" stroke="#adadad" strokeWidth="2" />
        </svg>
      </button>
      <button type="button" aria-label="페이지 레이아웃" className="ml-[30px]">
        <svg width="24" height="32" viewBox="0 0 24 32" fill="none" stroke="#5f5f5f" strokeWidth="2">
          <path d="M4 1 H14 L23 10 V28 Q23 31 20 31 H4 Q1 31 1 28 V4 Q1 1 4 1 Z M13 1 V11 H23" />
          <rect x="5" y="15" width="14" height="12" rx="2" />
          <path d="M5 21 H19 M10 15 V27" />
        </svg>
      </button>
      <button type="button" aria-label="페이지 나누기 미리 보기" className="ml-[45px]">
        <svg width="30" height="32" viewBox="0 0 30 32" fill="none" stroke="#5f5f5f" strokeWidth="2">
          <path d="M4 0 V10 H26 V0 M4 32 V22 H26 V32" />
          <path d="M0 16 H30" strokeDasharray="3 2" />
        </svg>
      </button>
      <button type="button" aria-label="축소" className="ml-[35px]">
        <svg width="16" height="18" viewBox="0 0 16 18">
          <path d="M0 9 H16" stroke="#5f5f5f" strokeWidth="2" />
        </svg>
      </button>
      <span className="relative ml-[14px] flex items-center">
        <input
          type="range"
          aria-label="확대/축소"
          value={zoom}
          onChange={(e) => setZoom(e.target.value)}
          className="h-2 w-[200px] appearance-none rounded-full bg-[#a2a2a2] [&::-webkit-slider-thumb]:relative [&::-webkit-slider-thumb]:z-10 [&::-webkit-slider-thumb]:size-8 [&::-webkit-slider-thumb]:appearance-none [&::-webkit-slider-thumb]:rounded-full [&::-webkit-slider-thumb]:bg-[#f6f6f6] [&::-webkit-slider-thumb]:shadow-[0_1px_3px_rgba(0,0,0,0.45)]"
        />
        <span className="pointer-events-none absolute left-[97px] size-1.5 rounded-full bg-[#e6e6e6]" />
      </span>
      <button type="button" aria-label="확대" className="ml-3">
        <svg width="18" height="18" viewBox="0 0 18 18">
          <path d="M0 9 H18 M9 0 V18" stroke="#5f5f5f" strokeWidth="2" />
        </svg>
      </button>
      <span className="ml-9 font-[Roboto,sans-serif] text-[24px]">176%</span>
    </footer>
  );
}

export default function App() {
  const [tab, setTab] = useState("차트 디자인");

  return (
    <div className="h-screen bg-black">
      <div className="flex h-full flex-col overflow-hidden rounded-b-xl bg-[#f5f5f5] font-['Noto_Sans_CJK_KR',sans-serif]">
        <header className="flex h-16 shrink-0 items-start pr-4 pl-5">
          <nav className="flex gap-[46px] text-[24px] leading-none font-medium text-[#222]">
            {tabs.map((t) => (
              <button
                key={t}
                type="button"
                onClick={() => setTab(t)}
                className={clsx(
                  "flex h-14 flex-col whitespace-nowrap",
                  (t === "차트 디자인" || t === "서식") && "text-[#377a48]",
                  tab === t && "font-bold"
                )}
              >
                <span className="flex flex-1 items-center pt-1">{t}</span>
                <span className={clsx("h-1.5 w-full rounded-full", tab === t && "bg-[#377a48]")} />
              </button>
            ))}
          </nav>
          <button
            type="button"
            className="mt-2 ml-auto flex h-12 w-[124px] items-center rounded-xl border-2 border-[#dcdcdc] bg-white pl-[18px] text-[24px] leading-none font-medium text-black"
          >
            <svg width="32" height="32" viewBox="0 0 32 32" fill="none">
              <path
                d="M6 2 H26 Q31 2 31 7 V18 Q31 23 26 23 H17 L9 30 V23 H6 Q1 23 1 18 V7 Q1 2 6 2 Z"
                stroke="#000"
                strokeWidth="2"
              />
            </svg>
            <span className="ml-[11px]">메모</span>
          </button>
          <button
            type="button"
            className="mt-2 ml-5 flex h-12 w-[154px] items-center rounded-xl bg-[#377a48] pl-[22px] text-[24px] leading-none font-medium text-white"
          >
            <svg width="30" height="30" viewBox="0 0 30 30" fill="none" stroke="#fff" strokeWidth="2" strokeLinejoin="round">
              <path d="M12 3 H6 Q1 3 1 8 V23 Q1 28 6 28 H20 Q26 28 26 23 V21" />
              <path d="M19 1 L29 11 L19 20 V15 C13 15 10 17 7 21 C8 12 12 7 19 6 Z" />
            </svg>
            <span className="ml-[11px]">공유</span>
            <svg className="ml-4" width="18" height="12" viewBox="0 0 18 12" fill="none">
              <path d="M1 2 L9 10 L17 2" stroke="#fff" strokeWidth="2" />
            </svg>
          </button>
        </header>

        <Ribbon />

        {/* 수식 입력줄 */}
        <div className="flex h-[58px] shrink-0 items-start border-b-6 border-double border-[#9c9c9c] bg-white pt-[7px]">
          <input
            aria-label="수식 입력줄"
            className="h-10 min-w-0 flex-1 border-y border-[#cacaca] bg-[#fdfdfd] px-3 text-[24px] outline-none"
          />
          <button
            type="button"
            aria-label="수식 입력줄 확장"
            className="flex h-10 w-11 items-center justify-center rounded-l-md border-2 border-r-0 border-[#cacaca] bg-white"
          >
            <svg width="14" height="12" viewBox="0 0 14 12">
              <path d="M0 0 H14 L7 12 Z" fill="#666" />
            </svg>
          </button>
        </div>

        <main className="flex min-h-0 flex-1">
          <div className="flex min-w-0 flex-1 flex-col">
            <Sheet />
            <SheetBar />
          </div>
          <FormatPane />
        </main>

        <StatusBar />
      </div>
    </div>
  );
}
